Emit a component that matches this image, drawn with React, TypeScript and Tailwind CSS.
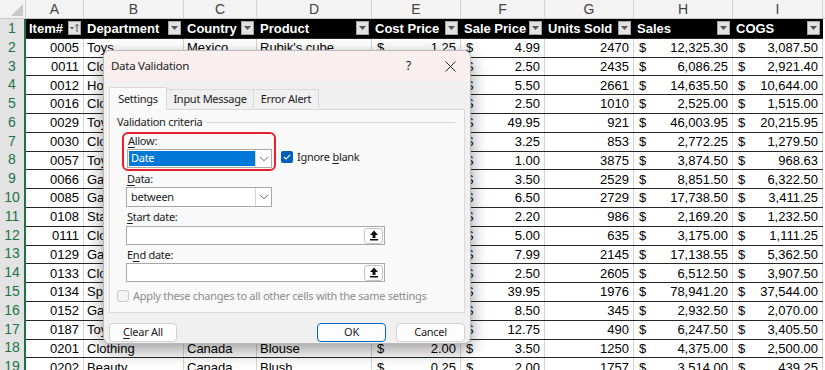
const colW = [
  "w-[58px]",
  "w-[100px]",
  "w-[73px]",
  "w-[115px]",
  "w-[89px]",
  "w-[84px]",
  "w-[89px]",
  "w-[99px]",
  "w-[90px]",
];

const letters = ["A", "B", "C", "D", "E", "F", "G", "H", "I"];

const heads = [
  "Item#",
  "Department",
  "Country",
  "Product",
  "Cost Price",
  "Sale Price",
  "Units Sold",
  "Sales",
  "COGS",
];

const rows = [
  ["0005", "Toys", "Mexico", "Rubik's cube", "1.25", "4.99", "2470", "12,325.30", "3,087.50"],
  ["0011", "Clothing", "USA", "T-shirt", "1.20", "2.50", "2435", "6,086.25", "2,921.40"],
  ["0012", "Home", "Canada", "Lamp", "4.00", "5.50", "2661", "14,635.50", "10,644.00"],
  ["0016", "Clothing", "Mexico", "Socks", "1.50", "2.50", "1010", "2,525.00", "1,515.00"],
  ["0029", "Toys", "USA", "Drone", "21.95", "49.95", "921", "46,003.95", "20,215.95"],
  ["0030", "Clothing", "Canada", "Hat", "1.50", "3.25", "853", "2,772.25", "1,279.50"],
  ["0057", "Toys", "Mexico", "Yo-yo", "0.25", "1.00", "3875", "3,874.50", "968.63"],
  ["0066", "Games", "USA", "Cards", "2.50", "3.50", "2529", "8,851.50", "6,322.50"],
  ["0085", "Games", "Canada", "Dominoes", "1.25", "6.50", "2729", "17,738.50", "3,411.25"],
  ["0108", "Stationery", "Mexico", "Notebook", "1.25", "2.20", "986", "2,169.20", "1,232.50"],
  ["0111", "Clothing", "USA", "Scarf", "1.75", "5.00", "635", "3,175.00", "1,111.25"],
  ["0129", "Games", "Canada", "Chess set", "2.50", "7.99", "2145", "17,138.55", "5,362.50"],
  ["0133", "Clothing", "Mexico", "Gloves", "1.50", "2.50", "2605", "6,512.50", "3,907.50"],
  ["0134", "Sports", "USA", "Racket", "19.00", "39.95", "1976", "78,941.20", "37,544.00"],
  ["0152", "Games", "Canada", "Puzzle", "6.00", "8.50", "345", "2,932.50", "2,070.00"],
  ["0187", "Toys", "Mexico", "Kite", "6.95", "12.75", "490", "6,247.50", "3,405.50"],
  ["0201", "Clothing", "Canada", "Blouse", "2.00", "3.50", "1250", "4,375.00", "2,500.00"],
  ["0202", "Beauty", "Canada", "Blush", "0.25", "2.00", "1757", "3,514.00", "439.25"],
];

function FilterButton({ sort }: { sort?: boolean }) {
  return (
    <span className="ml-auto flex h-[14px] w-[13px] shrink-0 items-center justify-center border border-[#a5a5a5] bg-[#e2e2e2]">
      {sort ? (
        <svg width="11" height="10" viewBox="0 0 11 10">
          <path d="M1 4 L5 4 L3 6.5 Z" fill="#555" />
          <path d="M8 9 V1.5 M6.3 3.2 L8 1.3 L9.7 3.2" stroke="#555" strokeWidth="1" fill="none" />
        </svg>
      ) : (
        <svg width="7" height="4" viewBox="0 0 7 4">
          <path d="M0 0 H7 L3.5 4 Z" fill="#555" />
        </svg>
      )}
    </span>
  );
}

function Cell({ col, value }: { col: number; value: string }) {
  const base = `${colW[col]} h-full shrink-0 border-r border-[#d4d4d4] flex items-center`;
  if (col === 0 || col === 6) {
    return <div className={`${base} justify-end pr-[4px]`}>{value}</div>;
  }
  if (col >= 4) {
    return (
      <div className={`${base} justify-between pl-[5px] pr-[4px]`}>
        <span>$</span>
        <span>{value}</span>
      </div>
    );
  }
  return <div className={`${base} overflow-hidden whitespace-nowrap pl-[3px]`}>{value}</div>;
}

function Chevron() {
  return (
    <svg width="10" height="6" viewBox="0 0 10 6">
      <path d="M1 0.8 L5 4.8 L9 0.8" stroke="#666" strokeWidth="1" fill="none" />
    </svg>
  );
}

function RangeButton() {
  return (
    <span className="ml-auto mr-[1px] flex h-[16px] w-[19px] items-center justify-center rounded-[3px] border border-[#c4c4c4] bg-white">
      <svg width="10" height="11" viewBox="0 0 10 11">
        <path d="M5 0.5 L1 5 H3.5 V8 H6.5 V5 H9 Z" fill="#111" />
        <rect x="1" y="9" width="8" height="1.5" fill="#111" />
      </svg>
    </span>
  );
}

function DataValidation() {
  return (
    <div className="absolute left-[103px] top-[50px] flex h-[294px] w-[368px] flex-col overflow-hidden rounded-[7px] border border-[#b8b8b8] bg-[#f0f0f0] font-['Noto_Sans',sans-serif] text-[11px] tracking-[-0.28px] text-[#1b1b1b] shadow-[0_6px_18px_rgba(0,0,0,0.4)]">
      <div className="flex h-[30px] shrink-0 items-center bg-[#f8efee] pl-[7px] text-[11.5px]">
        <span>Data Validation</span>
        <span className="ml-auto mr-[34px] text-[12px]">?</span>
        <svg width="11" height="11" viewBox="0 0 11 11" className="mr-[14px]">
          <path d="M0.5 0.5 L10.5 10.5 M10.5 0.5 L0.5 10.5" stroke="#222" strokeWidth="1" />
        </svg>
      </div>

      <div className="px-[5px] pt-[6px]">
        <div className="flex h-[22px] items-end">
          <div className="relative z-10 -mb-px flex h-[23px] w-[58px] items-center justify-center rounded-t-[2px] border border-b-0 border-[#d9d9d9] bg-[#f9f9f9]">
            Settings
          </div>
          <div className="flex h-[20px] w-[87px] items-center justify-center border border-b-0 border-l-0 border-[#d9d9d9]">
            Input Message
          </div>
          <div className="flex h-[20px] w-[65px] items-center justify-center border border-b-0 border-l-0 border-[#d9d9d9]">
            Error Alert
          </div>
        </div>

        <div className="h-[204px] border border-[#d9d9d9] bg-[#f9f9f9] px-[7px] pt-[5px]">
          <div className="flex h-[14px] items-center">
            <span>Validation criteria</span>
            <span className="ml-[4px] mr-[2px] h-px flex-1 bg-[#d6d6d6]" />
          </div>

          <div className="mt-[3px] flex items-start">
            <div className="ml-[5px] w-[154px] rounded-[6px] border-2 border-[#e8202c] pb-[1px] pl-[3px] pr-[2px]">
              <div className="flex h-[14px] items-center pl-[1px]">
                <span>
                  <span className="underline underline-offset-2">A</span>llow:
                </span>
              </div>
              <div className="mt-[1px] flex h-[19px] items-center border border-[#a8a8a8] bg-white pl-px">
                <span className="flex h-[15px] w-[126px] items-center bg-[#0078d7] pl-[2px] text-white">
                  Date
                </span>
                <span className="ml-auto flex h-full w-[16px] items-center justify-center border-l border-[#d4d4d4]">
                  <Chevron />
                </span>
              </div>
            </div>
            <div className="ml-[5px] mt-[17px] flex items-center">
              <span className="flex h-[12px] w-[12px] items-center justify-center rounded-[2px] bg-[#005fb8]">
                <svg width="8" height="6" viewBox="0 0 8 6">
                  <path d="M0.8 3 L3 5 L7.2 0.8" stroke="#fff" strokeWidth="1.1" fill="none" />
                </svg>
              </span>
              <span className="ml-[4px]">
                Ignore <span className="underline underline-offset-2">b</span>lank
              </span>
            </div>
          </div>

          <div className="ml-[10px] mt-[1px] flex h-[14px] items-center">
            <span className="underline underline-offset-2">D</span>ata:
          </div>
          <div className="ml-[9px] mt-[1px] flex h-[20px] w-[146px] items-center border border-[#a8a8a8] bg-white pl-[4px]">
            between
            <span className="ml-auto flex h-full w-[16px] items-center justify-center border-l border-[#d4d4d4]">
              <Chevron />
            </span>
          </div>

          <div className="ml-[10px] mt-[3px] flex h-[14px] items-center">
            <span className="underline underline-offset-2">S</span>tart date:
          </div>
          <div className="ml-[9px] mt-[2px] flex h-[19px] w-[259px] items-center border border-[#a8a8a8] bg-white">
            <RangeButton />
          </div>

          <div className="ml-[10px] mt-[3px] flex h-[14px] items-center">
            E<span className="underline underline-offset-2">n</span>d date:
          </div>
          <div className="ml-[9px] mt-[1px] flex h-[19px] w-[259px] items-center border border-[#a8a8a8] bg-white">
            <RangeButton />
          </div>

          <div className="mt-[7px] flex h-[14px] items-center text-[#8c8c8c]">
            <span className="h-[12px] w-[12px] rounded-[3px] border border-[#c8c8c8] bg-[#f4f4f4]" />
            <span className="ml-[4px]">Apply these changes to all other cells with the same settings</span>
          </div>
        </div>
      </div>

      <div className="mt-[10px] flex px-[5px]">
        <button className="flex h-[19px] w-[68px] items-center justify-center rounded-[4px] border border-[#d0d0d0] bg-[#fdfdfd]">
          <span>
            <span className="underline underline-offset-2">C</span>lear All
          </span>
        </button>
        <button className="ml-auto flex h-[19px] w-[69px] items-center justify-center rounded-[4px] border border-[#0067c0] bg-[#fdfdfd]">
          OK
        </button>
        <button className="ml-[10px] flex h-[19px] w-[69px] items-center justify-center rounded-[4px] border border-[#d0d0d0] bg-[#fdfdfd]">
          Cancel
        </button>
      </div>
    </div>
  );
}

export default function App() {
  return (
    <div className="relative h-[370px] w-[825px] overflow-hidden bg-white font-['Liberation_Sans',Arial,sans-serif] text-[13px] text-black">
      <div className="flex h-[19px] border-b border-[#c8c8c8] bg-[#f3f3f3] text-[14px] text-[#444]">
        <div className="relative w-[26px] shrink-0 border-r border-[#d0d0d0]">
          <svg width="12" height="12" viewBox="0 0 12 12" className="absolute bottom-[2px] right-[2px]">
            <path d="M12 0 V12 H0 Z" fill="#c9c9c9" />
          </svg>
        </div>
        {letters.map((l, i) => (
          <div
            key={l}
            className={`${colW[i]} flex shrink-0 items-center justify-center border-r border-[#d6d6d6]`}
          >
            {l}
          </div>
        ))}
      </div>

      <div className="flex h-[18.8px]">
        <div className="flex w-[26px] shrink-0 items-center justify-center border-r-2 border-[#217346] bg-[#e3e3e3] text-[14px] text-[#217346]">
          1
        </div>
        {heads.map((h, i) => (
          <div
            key={h}
            className={`${colW[i]} flex shrink-0 items-center bg-black pl-[3px] pr-[3px] font-bold text-white`}
          >
            <span>{h}</span>
            <FilterButton sort={i === 0} />
          </div>
        ))}
      </div>

      {rows.map((r, ri) => (
        <div key={r[0]} className="flex h-[18.8px]">
          <div className="flex w-[26px] shrink-0 items-center justify-center border-r-2 border-[#217346] bg-[#e3e3e3] text-[14px] text-[#217346]">
            {ri + 2}
          </div>
          <div className="flex border-t border-[#262626]">
            {r.map((v, ci) => (
              <Cell key={ci} col={ci} value={v} />
            ))}
          </div>
        </div>
      ))}

      <DataValidation />
    </div>
  );
}
